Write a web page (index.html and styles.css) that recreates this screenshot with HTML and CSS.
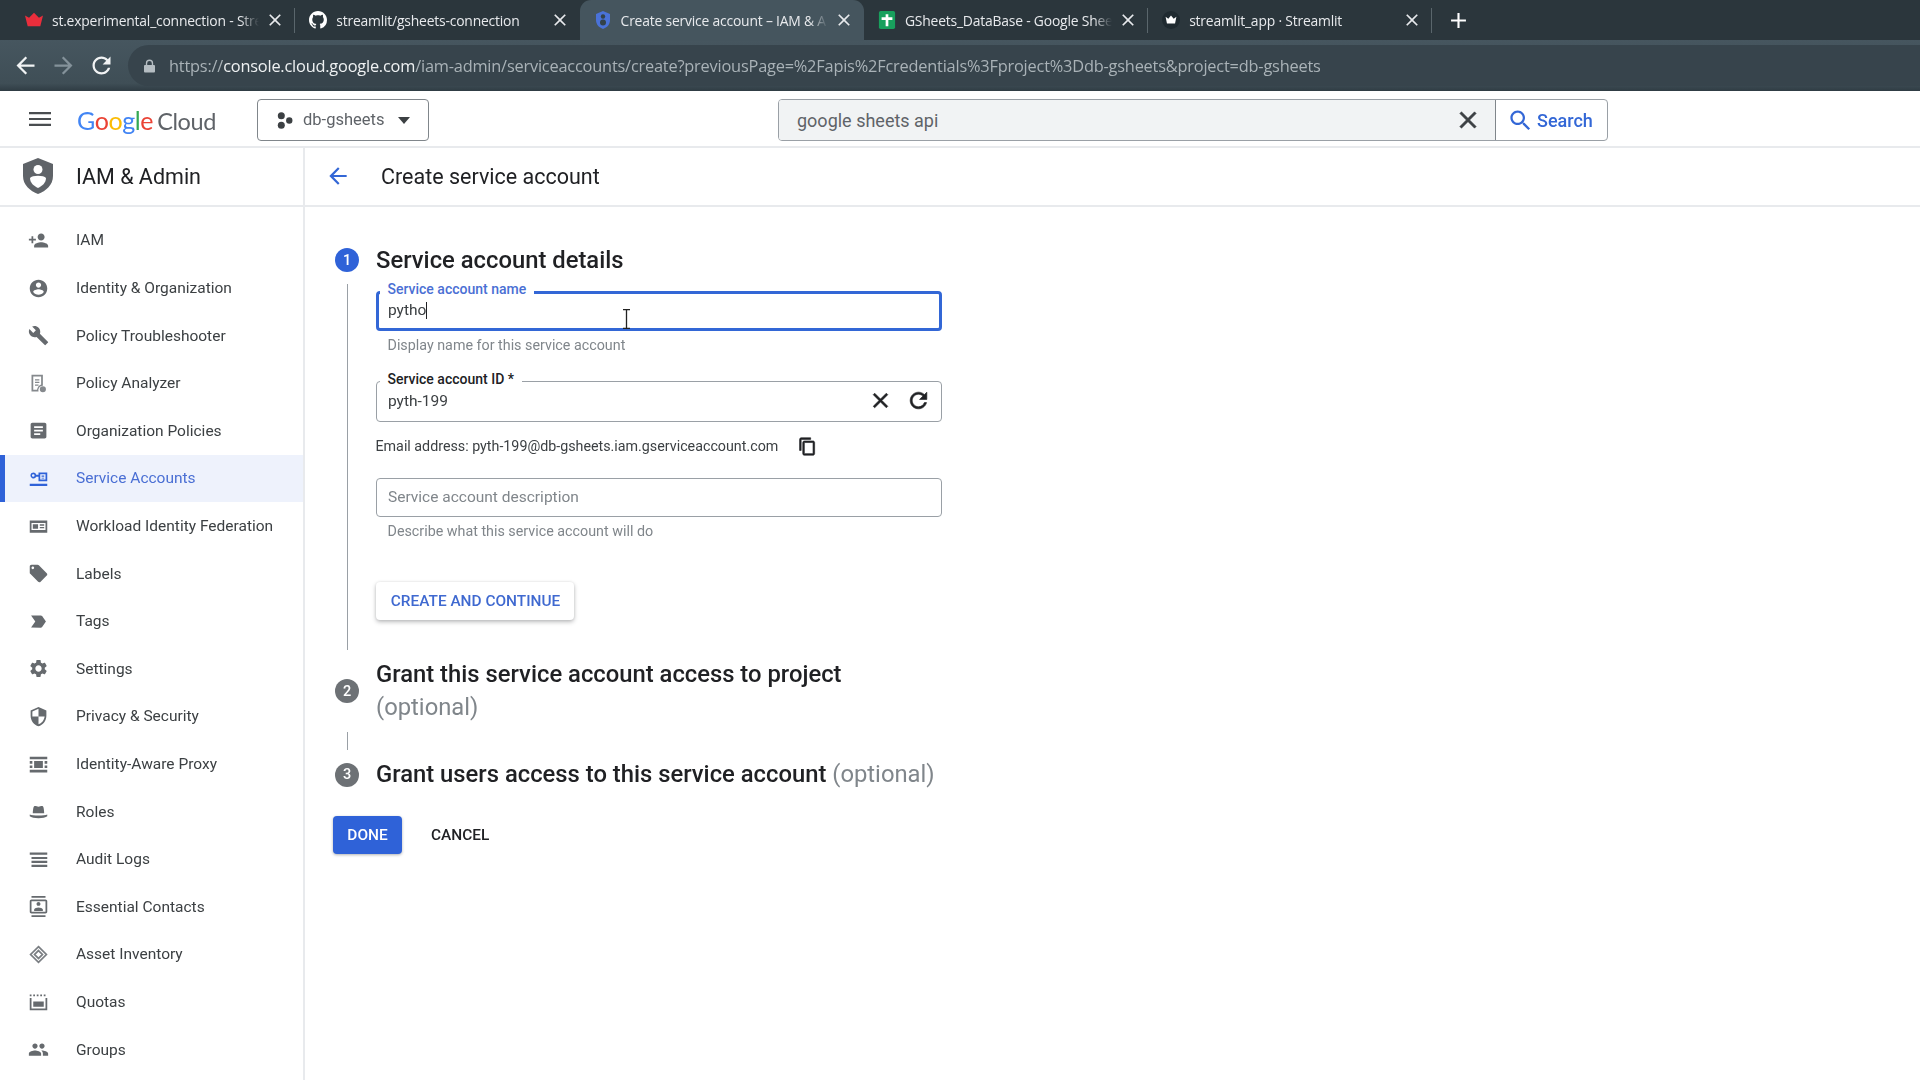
FILE: index.html
```html
<!DOCTYPE html>
<html lang="en">
<head>
<meta charset="utf-8">
<title>Create service account – IAM &amp; Admin</title>
<link rel="stylesheet" href="styles.css">
</head>
<body>
<div class="frame">
  <div class="tabstrip">
    <div class="tab">
      <svg class="fav" viewBox="0 0 20 16"><path fill="#ea2e3c" d="M0 3l4.500 2.500L10 0l5.500 5.500L20 3l-3 12H3z"/></svg>
      <span class="tab-title">st.experimental_connection - Stre</span>
      <svg class="tab-x" viewBox="0 0 24 24"><path d="M19 6.410L17.590 5 12 10.590 6.410 5 5 6.410 10.590 12 5 17.590 6.410 19 12 13.410 17.590 19 19 17.590 13.410 12z"/></svg>
    </div>
    <div class="tab">
      <svg class="fav" viewBox="0 0 16 16"><path fill="#fff" d="M8 0C3.580 0 0 3.580 0 8c0 3.540 2.290 6.530 5.470 7.590.4.070.55-.17.55-.38 0-.19-.01-.82-.01-1.490-2.010.37-2.530-.49-2.690-.94-.09-.23-.48-.94-.82-1.130-.28-.15-.68-.52-.01-.53.63-.01 1.080.58 1.230.82.72 1.210 1.870.87 2.330.66.07-.52.28-.87.51-1.070-1.780-.2-3.640-.89-3.640-3.950 0-.87.31-1.590.82-2.150-.08-.2-.36-1.020.08-2.120 0 0 .67-.21 2.200.82.64-.18 1.320-.27 2-.27.68 0 1.360.09 2 .27 1.530-1.040 2.200-.82 2.200-.82.44 1.100.16 1.920.08 2.120.51.56.82 1.270.82 2.150 0 3.070-1.870 3.750-3.650 3.950.29.25.54.73.54 1.480 0 1.070-.01 1.930-.01 2.200 0 .21.15.46.55.38A8.013 8.013 0 0016 8c0-4.420-3.580-8-8-8z"/></svg>
      <span class="tab-title tab-title-plain">streamlit/gsheets-connection</span>
      <svg class="tab-x" viewBox="0 0 24 24"><path d="M19 6.410L17.590 5 12 10.590 6.410 5 5 6.410 10.590 12 5 17.590 6.410 19 12 13.410 17.590 19 19 17.590 13.410 12z"/></svg>
    </div>
    <div class="tab tab-active">
      <svg class="fav" viewBox="0 0 16 18"><path fill="#4a72d8" d="M8 0l7 3v6c0 4.500-3 7.500-7 9-4-1.500-7-4.500-7-9V3z"/><circle cx="8" cy="5.500" r="2.200" fill="#33424a"/><circle cx="8" cy="11.500" r="3" fill="#33424a"/></svg>
      <span class="tab-title">Create service account – IAM &amp; A</span>
      <svg class="tab-x" viewBox="0 0 24 24"><path d="M19 6.410L17.590 5 12 10.590 6.410 5 5 6.410 10.590 12 5 17.590 6.410 19 12 13.410 17.590 19 19 17.590 13.410 12z"/></svg>
    </div>
    <div class="tab">
      <svg class="fav" viewBox="0 0 18 20"><rect width="18" height="20" rx="2" fill="#18a05d"/><path fill="#fff" d="M7.500 3.500h3V7H15v3h-4.500v7h-3v-7H3V7h4.500z"/></svg>
      <span class="tab-title">GSheets_DataBase - Google Shee</span>
      <svg class="tab-x" viewBox="0 0 24 24"><path d="M19 6.410L17.590 5 12 10.590 6.410 5 5 6.410 10.590 12 5 17.590 6.410 19 12 13.410 17.590 19 19 17.590 13.410 12z"/></svg>
    </div>
    <div class="tab tab-last">
      <svg class="fav" viewBox="0 0 20 20"><circle cx="10" cy="10" r="10" fill="#1f2a30"/><path fill="#fff" d="M4 6.500l3 2L10 5l3 3.500 3-2-1.500 7.500h-9z"/></svg>
      <span class="tab-title tab-title-plain">streamlit_app · Streamlit</span>
      <svg class="tab-x" viewBox="0 0 24 24"><path d="M19 6.410L17.590 5 12 10.590 6.410 5 5 6.410 10.590 12 5 17.590 6.410 19 12 13.410 17.590 19 19 17.590 13.410 12z"/></svg>
    </div>
    <svg class="tab-new" viewBox="0 0 16 16"><path fill="#fff" d="M7 1h2v6h6v2H9v6H7V9H1V7h6z"/></svg>
  </div>

  <div class="toolbar">
    <svg class="tool tool-first" viewBox="0 0 24 24"><path fill="#f1f3f4" d="M20 11H7.830l5.590-5.590L12 4l-8 8 8 8 1.410-1.410L7.830 13H20v-2z"/></svg>
    <svg class="tool" viewBox="0 0 24 24"><path fill="#84929a" d="M12 4l-1.410 1.410L16.170 11H4v2h12.170l-5.580 5.590L12 20l8-8z"/></svg>
    <svg class="tool" viewBox="0 0 24 24"><path fill="#f1f3f4" d="M17.650 6.350C16.200 4.900 14.210 4 12 4c-4.420 0-7.990 3.580-7.990 8s3.570 8 7.990 8c3.730 0 6.840-2.550 7.730-6h-2.080c-.82 2.330-3.040 4-5.650 4-3.310 0-6-2.690-6-6s2.690-6 6-6c1.660 0 3.140.69 4.220 1.780L13 11h7V4l-2.350 2.350z"/></svg>
    <div class="omnibox">
      <svg class="lock" viewBox="0 0 12 14"><path fill="#b5bdc2" d="M2 6V4a4 4 0 018 0v2h1a1 1 0 011 1v6a1 1 0 01-1 1H1a1 1 0 01-1-1V7a1 1 0 011-1zm1.500 0h5V4a2.500 2.500 0 00-5 0z"/></svg>
      <span class="url">https://<b class="url-host">console.cloud.google.com</b>/iam-admin/serviceaccounts/create?previousPage=%2Fapis%2Fcredentials%3Fproject%3Ddb-gsheets&amp;project=db-gsheets</span>
    </div>
  </div>

  <header class="appbar">
    <svg class="burger" viewBox="0 0 22 16"><path fill="#4a4d50" d="M0 1h22v2.200H0zM0 6.900h22v2.200H0zM0 12.800h22V15H0z"/></svg>
    <div class="logo"><span class="lg-b">G</span><span class="lg-r">o</span><span class="lg-y">o</span><span class="lg-b">g</span><span class="lg-g">l</span><span class="lg-r">e</span><span class="lg-cloud">Cloud</span></div>
    <div class="project">
      <svg class="project-ico" viewBox="0 0 16 16"><circle cx="5" cy="3.500" r="3.300" fill="#3c4043"/><circle cx="5" cy="12.500" r="3.300" fill="#3c4043"/><circle cx="12.500" cy="8" r="3" fill="#3c4043"/></svg>
      <span class="project-name">db-gsheets</span>
      <span class="caret"></span>
    </div>
    <div class="search">
      <div class="search-input">
        <span class="search-text">google sheets api</span>
        <svg class="search-x" viewBox="0 0 24 24"><path fill="#3c4043" stroke="#3c4043" stroke-width=".5" d="M19 6.410L17.590 5 12 10.590 6.410 5 5 6.410 10.590 12 5 17.590 6.410 19 12 13.410 17.590 19 19 17.590 13.410 12z"/></svg>
      </div>
      <div class="search-btn">
        <svg class="search-ico" viewBox="0 0 24 24"><path fill="#3367d6" d="M15.500 14h-.79l-.28-.27C15.410 12.590 16 11.110 16 9.500 16 5.910 13.090 3 9.500 3S3 5.910 3 9.500 5.910 16 9.500 16c1.610 0 3.090-.59 4.230-1.570l.27.28v.79l5 4.990L20.490 19l-4.990-5zm-6 0C7.010 14 5 11.990 5 9.500S7.010 5 9.500 5 14 7.010 14 9.500 11.990 14 9.500 14z"/></svg>
        <span>Search</span>
      </div>
    </div>
  </header>

  <div class="layout">
    <aside class="sidebar">
      <div class="side-head">
        <svg class="shield" viewBox="0 0 30 36"><path fill="#5f6368" d="M15 0l15 6v12c0 9-7 15-15 18C7 33 0 27 0 18V6z"/><circle cx="15" cy="11.500" r="4.500" fill="#fff"/><path fill="#fff" d="M7 20c2-3 14-3 16 0 0 5-4 8-8 10-4-2-8-5-8-10z"/></svg>
        <span class="side-title">IAM &amp; Admin</span>
      </div>
      <nav class="nav">
        <a class="nav-item"><svg class="nav-ico" viewBox="0 0 24 24"><path d="M15 12c2.210 0 4-1.790 4-4s-1.790-4-4-4-4 1.790-4 4 1.790 4 4 4zm-9-2V7H4v3H1v2h3v3h2v-3h3v-2H6zm9 4c-2.670 0-8 1.340-8 4v2h16v-2c0-2.660-5.330-4-8-4z"/></svg><span>IAM</span></a>
        <a class="nav-item"><svg class="nav-ico" viewBox="0 0 24 24"><path d="M12 2C6.480 2 2 6.480 2 12s4.480 10 10 10 10-4.480 10-10S17.520 2 12 2zm0 3c1.660 0 3 1.340 3 3s-1.340 3-3 3-3-1.340-3-3 1.340-3 3-3zm0 14.200c-2.500 0-4.710-1.280-6-3.220.03-1.990 4-3.080 6-3.080 1.990 0 5.970 1.090 6 3.080-1.290 1.940-3.500 3.220-6 3.220z"/></svg><span>Identity &amp; Organization</span></a>
        <a class="nav-item"><svg class="nav-ico" viewBox="0 0 24 24"><path d="M22.700 19l-9.100-9.100c.9-2.300.4-5-1.500-6.900-2-2-5-2.400-7.400-1.300L9 6 6 9 1.600 4.700C.4 7.100.9 10.100 2.900 12.100c1.900 1.900 4.600 2.400 6.900 1.500l9.100 9.100c.4.4 1 .4 1.400 0l2.300-2.300c.5-.4.5-1.100.1-1.400z"/></svg><span>Policy Troubleshooter</span></a>
        <a class="nav-item"><svg class="nav-ico nav-ico-light" viewBox="0 0 24 24"><path fill-rule="evenodd" d="M4 2h13v12.500a5 5 0 00-5 6.500H4zm2 2v15h4.300c.4-3 2.500-5.300 4.700-6V4zm2 3h5v1.500H8zm0 3h5v1.500H8zm0 3h4v1.500H8zm9 2a3.500 3.500 0 110 7 3.500 3.500 0 010-7z"/></svg><span>Policy Analyzer</span></a>
        <a class="nav-item"><svg class="nav-ico" viewBox="0 0 24 24"><path d="M19 3H5c-1.100 0-2 .9-2 2v14c0 1.100.9 2 2 2h14c1.100 0 2-.9 2-2V5c0-1.100-.9-2-2-2zm-5 14H7v-2h7v2zm3-4H7v-2h10v2zm0-4H7V7h10v2z"/></svg><span>Organization Policies</span></a>
        <a class="nav-item nav-active"><svg class="nav-ico" viewBox="0 0 24 24"><path fill-rule="evenodd" d="M2 18h20v2.500H2zM6 5a3.500 3.500 0 013.400 2.800H12V5h10v10H12v-5h-2.600A3.500 3.500 0 116 5zm0 2a1.500 1.500 0 100 3 1.500 1.500 0 000-3zm8 0v6h6V7zm1.500 1.500h3V10h-3zm0 2.500h3v1h-3z"/></svg><span>Service Accounts</span></a>
        <a class="nav-item"><svg class="nav-ico" viewBox="0 0 24 24"><path fill-rule="evenodd" d="M2 5h20v14H2zm2 3v8h16V8zm1.500 1.500h6v5h-6zm8 0h5V11h-5zm0 3h5v1.500h-5z"/></svg><span>Workload Identity Federation</span></a>
        <a class="nav-item"><svg class="nav-ico" viewBox="0 0 24 24"><path d="M21.410 11.580l-9-9C12.050 2.220 11.550 2 11 2H4c-1.100 0-2 .9-2 2v7c0 .55.22 1.050.59 1.420l9 9c.36.36.86.58 1.410.58.55 0 1.050-.22 1.410-.59l7-7c.37-.36.59-.86.59-1.410 0-.55-.23-1.060-.59-1.420zM5.500 7C4.670 7 4 6.330 4 5.500S4.670 4 5.500 4 7 4.670 7 5.500 6.330 7 5.500 7z"/></svg><span>Labels</span></a>
        <a class="nav-item"><svg class="nav-ico" viewBox="0 0 24 24"><path d="M3.500 18.990l11 .01c.67 0 1.270-.33 1.630-.84L20.500 12l-4.370-6.160c-.36-.51-.96-.84-1.630-.84l-11 .01L8.340 12 3.500 18.990z"/></svg><span>Tags</span></a>
        <a class="nav-item"><svg class="nav-ico" viewBox="0 0 24 24"><path d="M19.140 12.940c.04-.3.06-.61.06-.94 0-.32-.02-.64-.07-.94l2.030-1.580c.18-.14.23-.41.12-.61l-1.920-3.320c-.12-.22-.37-.29-.59-.22l-2.390.96c-.5-.38-1.030-.7-1.620-.94l-.36-2.540c-.04-.24-.24-.41-.48-.41h-3.840c-.24 0-.43.17-.47.41l-.36 2.540c-.59.24-1.130.57-1.620.94l-2.390-.96c-.22-.08-.47 0-.59.22L2.740 8.870c-.12.21-.08.47.12.61l2.030 1.580c-.05.3-.09.63-.09.94s.02.64.07.94l-2.030 1.580c-.18.14-.23.41-.12.61l1.920 3.320c.12.22.37.29.59.22l2.390-.96c.5.38 1.030.7 1.620.94l.36 2.540c.05.24.24.41.48.41h3.840c.24 0 .44-.17.47-.41l.36-2.540c.59-.24 1.130-.56 1.620-.94l2.390.96c.22.08.47 0 .59-.22l1.920-3.320c.12-.22.07-.47-.12-.61l-2.010-1.580zM12 15.600c-1.980 0-3.600-1.620-3.600-3.600s1.620-3.600 3.600-3.600 3.600 1.620 3.600 3.600-1.620 3.600-3.600 3.600z"/></svg><span>Settings</span></a>
        <a class="nav-item"><svg class="nav-ico" viewBox="0 0 24 24"><path d="M12 1L3 5v6c0 5.550 3.840 10.740 9 12 5.160-1.260 9-6.450 9-12V5l-9-4zm0 10.990h7c-.53 4.120-3.280 7.790-7 8.940V12H5V6.300l7-3.110v8.800z"/></svg><span>Privacy &amp; Security</span></a>
        <a class="nav-item"><svg class="nav-ico" viewBox="0 0 24 24"><path d="M2 3h20v3H2zM2 18h20v3H2zM7 8h10v8H7zM2 8h3v3H2zM2 13h3v3H2zM19 8h3v3h-3zM19 13h3v3h-3z"/></svg><span>Identity-Aware Proxy</span></a>
        <a class="nav-item"><svg class="nav-ico" viewBox="0 0 24 24"><path d="M7 6c1.500-1 3 .5 5 .5S15.500 5 17 6c1 .7 1.500 6 1.500 8h-13c0-2 .5-7.300 1.500-8zM2 15.500c3 1.500 17 1.500 20 0v2c-3 3-17 3-20 0z"/></svg><span>Roles</span></a>
        <a class="nav-item"><svg class="nav-ico" viewBox="0 0 24 24"><path d="M2 4h20v2.500H2zM4 9h18v2.500H4zM4 13.500h18V16H4zM4 18h18v2.500H4z"/></svg><span>Audit Logs</span></a>
        <a class="nav-item"><svg class="nav-ico" viewBox="0 0 24 24"><path fill-rule="evenodd" d="M20 0H4v2h16V0zM4 24h16v-2H4v2zM20 4H4c-1.100 0-2 .9-2 2v12c0 1.100.9 2 2 2h16c1.100 0 2-.9 2-2V6c0-1.100-.9-2-2-2zm0 14H4V6h16zm-8-11.250c1.240 0 2.250 1.010 2.250 2.250s-1.010 2.250-2.250 2.250S9.750 10.240 9.750 9 10.760 6.750 12 6.750zM17 17H7v-1.500c0-1.670 3.330-2.500 5-2.500s5 .83 5 2.500V17z"/></svg><span>Essential Contacts</span></a>
        <a class="nav-item"><svg class="nav-ico nav-ico-stroke" viewBox="0 0 24 24"><path d="M12 3l9 9-9 9-9-9zM12 7.500l4.500 4.500-4.500 4.500L7.500 12z"/></svg><span>Asset Inventory</span></a>
        <a class="nav-item"><svg class="nav-ico" viewBox="0 0 24 24"><path d="M2 4h2v2H2zM6 4h2v2H6zM10 4h2v2h-2zM14 4h2v2h-2zM18 4h2v2h-2zM2 8h2v12h16V8h2v14H2zM6 12h12v6H6z"/></svg><span>Quotas</span></a>
        <a class="nav-item"><svg class="nav-ico" viewBox="0 0 24 24"><path d="M16 11c1.660 0 2.990-1.340 2.990-3S17.660 5 16 5c-1.660 0-3 1.340-3 3s1.340 3 3 3zm-8 0c1.660 0 2.990-1.340 2.990-3S9.660 5 8 5C6.340 5 5 6.340 5 8s1.340 3 3 3zm0 2c-2.330 0-7 1.170-7 3.500V19h14v-2.500c0-2.330-4.670-3.500-7-3.500zm8 0c-.29 0-.62.02-.97.05 1.160.84 1.970 1.970 1.970 3.450V19h6v-2.500c0-2.330-4.670-3.500-7-3.500z"/></svg><span>Groups</span></a>
      </nav>
    </aside>

    <main class="main">
      <div class="subhead">
        <svg class="back" viewBox="0 0 24 24"><path fill="#3367d6" d="M20 11H7.830l5.590-5.590L12 4l-8 8 8 8 1.410-1.410L7.830 13H20v-2z"/></svg>
        <h1 class="page-title">Create service account</h1>
      </div>
      <div class="stepper">
        <div class="step-head">
          <span class="step-num step-num-on">1</span>
          <h2 class="step-title">Service account details</h2>
        </div>
        <div class="step-body">
          <div class="field field-focus">
            <label class="field-label">Service account name</label>
            <span class="field-value">pytho</span><span class="caret-bar"></span>
            <svg class="ibeam" viewBox="0 0 9 20"><path fill="none" stroke="#222" stroke-width="1.300" d="M1 .7h7M1 19.300h7M4.500 .7v18.600"/></svg>
          </div>
          <p class="help">Display name for this service account</p>
          <div class="field field-id">
            <label class="field-label">Service account ID *</label>
            <span class="field-value">pyth-199</span>
            <svg class="field-ico" viewBox="0 0 24 24"><path d="M19 6.410L17.590 5 12 10.590 6.410 5 5 6.410 10.590 12 5 17.590 6.410 19 12 13.410 17.590 19 19 17.590 13.410 12z"/></svg>
            <svg class="field-ico" viewBox="0 0 24 24"><path d="M17.650 6.350C16.200 4.900 14.210 4 12 4c-4.420 0-7.990 3.580-7.990 8s3.570 8 7.990 8c3.730 0 6.840-2.550 7.730-6h-2.080c-.82 2.330-3.040 4-5.650 4-3.310 0-6-2.690-6-6s2.690-6 6-6c1.660 0 3.140.69 4.220 1.780L13 11h7V4l-2.350 2.350z"/></svg>
          </div>
          <div class="email">
            <span>Email address: pyth-199@db-gsheets.iam.gserviceaccount.com</span>
            <svg class="copy" viewBox="0 0 24 24"><path d="M16 1H4c-1.100 0-2 .9-2 2v14h2V3h12V1zm3 4H8c-1.100 0-2 .9-2 2v14c0 1.100.9 2 2 2h11c1.100 0 2-.9 2-2V7c0-1.100-.9-2-2-2zm0 16H8V7h11v14z"/></svg>
          </div>
          <div class="field field-desc"><span class="field-placeholder">Service account description</span></div>
          <p class="help help-desc">Describe what this service account will do</p>
          <button class="btn-create">CREATE AND CONTINUE</button>
        </div>
        <div class="step-head step-two">
          <span class="step-num">2</span>
          <h2 class="step-title">Grant this service account access to project <span class="opt">(optional)</span></h2>
        </div>
        <div class="stem-short"></div>
        <div class="step-head">
          <span class="step-num">3</span>
          <h2 class="step-title">Grant users access to this service account <span class="opt">(optional)</span></h2>
        </div>
        <div class="actions">
          <button class="btn-done">DONE</button>
          <button class="btn-cancel">CANCEL</button>
        </div>
      </div>
    </main>
  </div>
</div>
</body>
</html>
```

FILE: styles.css
```css
* { box-sizing: border-box; }
html, body { margin: 0; height: 100%; background: #fff; overflow: hidden; }
.frame { width: 1920px; height: 1080px; display: flex; flex-direction: column; font-family: Roboto, sans-serif; filter: blur(.5px); overflow: hidden; }

/* browser chrome */
.tabstrip { height: 40px; flex: none; background: #2b363c; display: flex; align-items: center; padding-left: 11px; }
.tab { width: 284.300px; height: 40px; flex: none; display: flex; align-items: center; padding: 0 10px 0 14px; position: relative; color: #e8eaed; }
.tab::after { content: ""; position: absolute; right: 0; top: 8px; height: 25px; width: 1px; background: #5a666c; }
.tab:nth-child(2)::after, .tab:nth-child(3)::after { display: none; }
.tab-active { background: #45555e; border-radius: 11px 11px 0 0; height: 41px; align-self: flex-end; margin-bottom: -1px; padding-bottom: 1px; }
.fav { width: 18px; height: 18px; flex: none; margin-right: 9px; }
.tab-title { flex: 1; min-width: 0; white-space: nowrap; font: 13.900px "Open Sans", sans-serif; letter-spacing: -.2px; color: #e8eaed; -webkit-mask-image: linear-gradient(90deg, #000 91%, transparent 100%); mask-image: linear-gradient(90deg, #000 91%, transparent 100%); }
.tab-title-plain { -webkit-mask-image: none; mask-image: none; }
.tab-x { width: 20px; height: 20px; flex: none; fill: #e8eaed; margin-left: 6px; }
.tab-new { width: 17px; height: 17px; margin-left: 18px; flex: none; }

.toolbar { height: 51px; flex: none; display: flex; align-items: center; padding: 5px 0 5px 14px; background: linear-gradient(#46565f, #3f4e56 85%, #2f3c43); }
.tool { width: 27px; height: 27px; flex: none; margin-right: 11px; }
.tool-first { margin-left: -2px; }
.omnibox { flex: 1; align-self: stretch; margin-left: 2px; background: #37444c; border-radius: 21px 0 0 21px; display: flex; align-items: center; padding-left: 16px; }
.lock { width: 11px; height: 14px; flex: none; margin-right: 14px; }
.url { font: 16.350px "Open Sans", sans-serif; letter-spacing: -.2px; color: #a9b2b7; white-space: nowrap; }
.url-host { font-weight: 400; color: #eef1f2; }

.appbar { height: 57px; flex: none; display: flex; align-items: center; border-bottom: 2px solid #e8eaed; padding: 3px 0 0 29px; position: relative; }
.burger { width: 22px; height: 16px; flex: none; margin-top: -3px; }
.logo { width: 180px; margin-left: 26px; font: 25px Lato, sans-serif; letter-spacing: -.4px; white-space: nowrap; flex: none; }
.lg-b { color: #4285f4; } .lg-r { color: #ea4335; } .lg-y { color: #fbbc05; } .lg-g { color: #34a853; }
.lg-cloud { color: #5f6368; margin-left: 4px; font-size: 23.500px; }
.project { width: 172px; height: 42px; flex: none; border: 1px solid #80868b; border-radius: 4px; display: flex; align-items: center; padding-left: 18px; }
.project-ico { width: 17px; height: 17px; flex: none; }
.project-name { margin: -2px 0 0 10px; font-size: 16.500px; color: #5f6368; }
.caret { margin-left: 14px; border: 6.500px solid transparent; border-top: 7px solid #3c4043; border-bottom: 0; }
.search { margin-left: 349px; width: 830px; height: 42px; flex: none; display: flex; border: 1px solid #9aa0a6; border-radius: 4px; overflow: hidden; }
.search-input { flex: 1; background: #f1f3f4; display: flex; align-items: center; padding: 0 13px 0 18px; border-right: 1px solid #80868b; }
.search-text { flex: 1; font-size: 18px; color: #5f6368; }
.search-x { width: 28px; height: 28px; flex: none; }
.search-btn { width: 111px; flex: none; display: flex; align-items: center; padding-left: 11px; color: #3367d6; font-size: 18px; font-weight: 500; }
.search-ico { width: 27px; height: 27px; margin-right: 3px; flex: none; }

.layout { flex: 1; display: flex; min-height: 0; }
.sidebar { width: 305px; flex: none; border-right: 2px solid #e8eaed; }
.side-head { height: 59px; display: flex; align-items: center; padding: 0 0 1px 23px; border-bottom: 2px solid #e8eaed; }
.shield { width: 30px; height: 36px; flex: none; }
.side-title { margin-left: 23px; font-size: 21.500px; color: #202124; }
.nav { padding-top: 9.700px; }
.nav-item { height: 47.600px; display: flex; align-items: center; padding-left: 27.500px; font-size: 15.500px; color: #3c4043; }
.nav-ico { width: 21px; height: 21px; flex: none; margin-right: 27.500px; fill: #666a6e; }
.nav-ico-light { fill: #85898d; }
.nav-ico-stroke { fill: none; stroke: #7a7e82; stroke-width: 2; }
.nav-active { background: #eef2fc; color: #4a6fd4; box-shadow: inset 5px 0 0 #2f62d8; }
.nav-active .nav-ico { fill: #2f62d8; }

.main { flex: 1; min-width: 0; }
.subhead { height: 59px; display: flex; align-items: center; padding: 0 0 1px 20px; border-bottom: 2px solid #e8eaed; }
.back { width: 26px; height: 26px; flex: none; }
.page-title { margin: 0 0 0 30px; font-size: 21.500px; font-weight: 400; color: #202124; }
.stepper { padding: 36.500px 0 0 30px; width: 680px; }
.step-head { display: flex; align-items: center; }
.step-num { width: 24px; height: 24px; flex: none; border-radius: 50%; margin-right: 17px; background: #6d7175; color: #fff; font-size: 14.500px; font-weight: 500; display: flex; align-items: center; justify-content: center; }
.step-num-on { background: #2f62d8; }
.step-title { margin: 0; font-size: 23.800px; font-weight: 500; line-height: 33px; color: #202124; width: 570px; }
.opt { font-weight: 400; color: #80868b; }
.step-body { margin: 7px 0 0 11.500px; border-left: 1.500px solid #9aa0a6; padding: 7.500px 0 29.500px 28px; }
.field { width: 566px; height: 41px; border: 1px solid #9aa0a6; border-radius: 4px; display: flex; align-items: center; padding: 0 10px 0 11.500px; position: relative; font-size: 15.500px; color: #3c4043; }
.field-focus { height: 40px; border: 3px solid #3367d6; padding-left: 9.500px; }
.field-label { position: absolute; left: 3px; top: -11.500px; padding: 0 8px; background: #fff; font-size: 14px; font-weight: 500; line-height: 16px; color: #202124; white-space: nowrap; }
.field-focus .field-label { left: 1px; top: -13px; color: #4a6fd4; }
.field-value { flex: none; margin-top: -2px; }
.caret-bar { width: 1px; height: 17px; background: #202124; flex: none; margin-top: -2px; }
.ibeam { position: absolute; left: 243.500px; top: 15px; width: 9px; height: 20px; }
.field-id .field-value { flex: 1; }
.field-ico { width: 25px; height: 25px; flex: none; fill: #202124; stroke: #202124; stroke-width: .6; margin-left: 13px; margin-top: -2px; }
.help { margin: 4px 0 0 12px; height: 20px; line-height: 20px; font-size: 14.300px; color: #80868b; }
.field-id { margin-top: 26px; }
.email { margin-top: 14px; height: 20px; display: flex; align-items: center; font-size: 14.280px; color: #3c4043; }
.copy { width: 19px; height: 19px; flex: none; margin-left: 19.500px; fill: #202124; stroke: #202124; stroke-width: .8; }
.field-desc { margin-top: 21.500px; height: 39px; }
.field-desc .field-placeholder { margin-top: 0; }
.field-placeholder { color: #80868b; }
.help-desc { margin-top: 4px; }
.btn-create { display: block; margin-top: 41.500px; width: 198px; height: 38px; border: 0; border-radius: 4px; background: #fff; box-shadow: 0 2px 4px rgba(60,64,67,.35), 0 0 3px rgba(60,64,67,.1); color: #3f69d0; font: 500 15.400px Roboto, sans-serif; padding: 0 0 0 2px; }
.step-two { margin-top: 8.500px; }
.stem-short { margin: 7.500px 0 8.500px 11.500px; width: 1.500px; height: 18px; background: #9aa0a6; }
.actions { margin: 25.300px 0 0 -2px; display: flex; align-items: center; }
.btn-done { width: 69px; height: 38px; border: 0; border-radius: 4px; background: #2f62d8; color: #fff; font: 500 15.400px Roboto, sans-serif; box-shadow: 0 1px 3px rgba(60,64,67,.4); padding: 0; }
.btn-cancel { margin-left: 29px; border: 0; background: none; color: #202124; font: 500 15.400px Roboto, sans-serif; padding: 0; }
```
